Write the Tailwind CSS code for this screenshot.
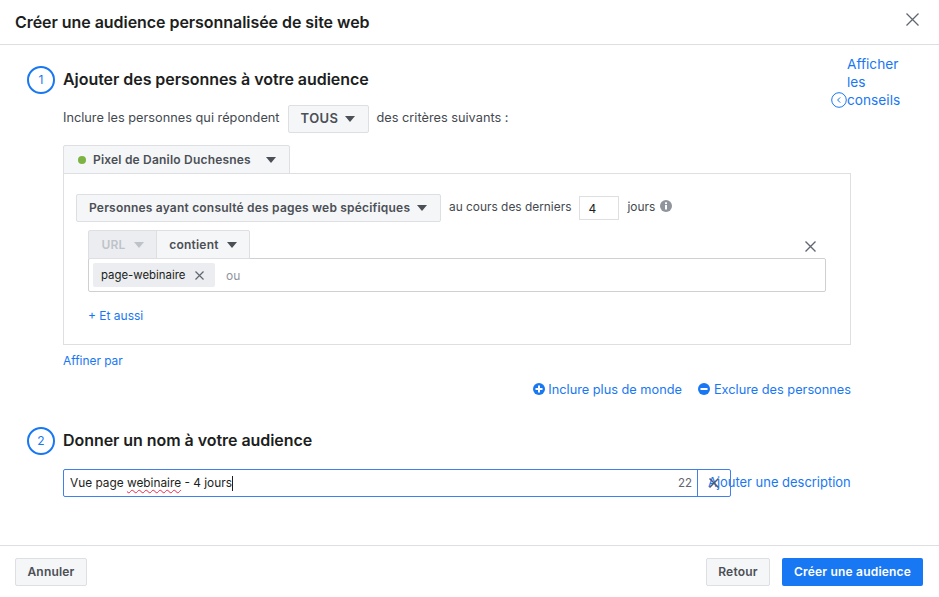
<!DOCTYPE html>
<html lang="fr">
<head>
    <meta charset="UTF-8">
    <meta name="viewport" content="width=device-width, initial-scale=1.0">
    <title>Créer une audience</title>
    <script src="https://cdn.jsdelivr.net/npm/@tailwindcss/browser@4"></script>
</head>
<body class="bg-white">
<div class="w-[939px] h-[597px] flex flex-col overflow-hidden font-['Inter','Liberation_Sans',sans-serif] text-[12px] text-[#1c1e21]">

    <header class="h-[45px] shrink-0 border-b border-[#dddfe2] flex items-center justify-between pl-[15px] pr-[20px]">
        <h1 class="text-[16px] font-semibold tracking-[-0.05px]">Créer une audience personnalisée de site web</h1>
        <svg class="w-[13px] h-[13px] -mt-[5px]" viewBox="0 0 13 13" fill="none" stroke="#606770" stroke-width="1.3"><path d="M.5.5l12 12M12.5.5l-12 12"/></svg>
    </header>

    <main class="flex-1 relative pl-[27px]">
        <!-- conseils -->
        <div class="absolute left-[847px] top-[10px] w-[70px] flex">
            <svg class="absolute -left-[16px] top-[37px] w-[16px] h-[16px]" viewBox="0 0 16 16" fill="none" stroke="#1877f2"><circle cx="8" cy="8" r="7.3"/><path d="M9.2 5.4L6.6 8l2.6 2.6"/></svg>
            <a class="text-[13.7px] leading-[18px] text-[#1877f2]">Afficher les conseils</a>
        </div>

        <section class="pt-[21px]">
            <div class="flex items-center gap-[8px]">
                <span class="w-[28px] h-[28px] rounded-full border-2 border-[#1877f2] flex items-center justify-center text-[#1877f2] text-[12px]">1</span>
                <h2 class="-mt-[2px] text-[16px] font-semibold tracking-[-0.05px]">Ajouter des personnes à votre audience</h2>
            </div>

            <div class="ml-[36px] mt-[11px] flex items-center h-[28px] text-[12.75px] text-[#444950]">
                <span class="-mt-[2px]">Inclure les personnes qui répondent</span>
                <button class="ml-[8px] w-[81px] h-[28px] flex items-center justify-center gap-[7px] bg-[#f5f6f7] border border-[#dddfe2] rounded-[2px] font-semibold text-[13px] tracking-[0.4px] text-[#4b4f56]">TOUS
                    <svg class="w-[10px] h-[6px]" viewBox="0 0 10 6" fill="#4b4f56"><path d="M0 0h10L5 6z"/></svg>
                </button>
                <span class="ml-[8px] -mt-[2px]">des critères suivants :</span>
            </div>

            <div class="ml-[36px] mt-[12px] w-[788px]">
                <button class="w-[227px] h-[29px] flex items-center pl-[14px] bg-[#f5f6f7] border border-[#dddfe2] rounded-t-[2px] font-semibold text-[#4b4f56] text-[12px] tracking-[0.2px]">
                    <span class="w-[8px] h-[8px] rounded-full bg-[#7cb342]"></span>
                    <span class="ml-[7px]">Pixel de Danilo Duchesnes</span>
                    <svg class="ml-[15px] w-[10px] h-[6px]" viewBox="0 0 10 6" fill="#4b4f56"><path d="M0 0h10L5 6z"/></svg>
                </button>

                <div class="h-[172px] -mt-px border border-[#dddfe2] pl-[12px] pt-[20px] relative">
                    <div class="flex items-center h-[28px]">
                        <button class="w-[365px] h-[28px] flex items-center pl-[12px] bg-[#f5f6f7] border border-[#dddfe2] rounded-[2px] font-semibold text-[#4b4f56] text-[12px] tracking-[0.2px]">
                            Personnes ayant consulté des pages web spécifiques
                            <svg class="ml-[7px] w-[10px] h-[6px]" viewBox="0 0 10 6" fill="#4b4f56"><path d="M0 0h10L5 6z"/></svg>
                        </button>
                        <span class="ml-[8px] -mt-[2px] text-[11.9px] text-[#444950]">au cours des derniers</span>
                        <input class="ml-[8px] w-[40px] h-[24px] border border-[#dddfe2] pl-[8px] text-[12px] text-[#1c1e21] outline-none" value="4">
                        <span class="ml-[8px] -mt-[2px] text-[11.9px] text-[#444950]">jours</span>
                        <svg class="ml-[5px] -mt-[4px] w-[12px] h-[12px]" viewBox="0 0 12 12"><circle cx="6" cy="6" r="6" fill="#90949c"/><rect x="5" y="5" width="2" height="4.5" fill="#fff"/><rect x="5" y="2.3" width="2" height="1.8" fill="#fff"/></svg>
                    </div>

                    <div class="ml-[12px] mt-[8px] w-[738px]">
                        <div class="flex items-end justify-between">
                            <div class="flex h-[29px] font-semibold text-[12px] tracking-[0.2px]">
                                <span class="w-[69px] flex items-center justify-center gap-[8px] bg-[#ebedf0] border border-[#dddfe2] rounded-tl-[2px] text-[#bec3c9]">URL
                                    <svg class="w-[10px] h-[6px]" viewBox="0 0 10 6" fill="#bec3c9"><path d="M0 0h10L5 6z"/></svg>
                                </span>
                                <span class="w-[94px] -ml-px flex items-center justify-center gap-[8px] bg-[#f5f6f7] border border-[#dddfe2] rounded-tr-[2px] text-[#4b4f56]">contient
                                    <svg class="w-[10px] h-[6px]" viewBox="0 0 10 6" fill="#4b4f56"><path d="M0 0h10L5 6z"/></svg>
                                </span>
                            </div>
                            <svg class="mr-[10px] mb-[7px] w-[11px] h-[11px]" viewBox="0 0 11 11" fill="none" stroke="#606770" stroke-width="1.4"><path d="M.5.5l10 10M10.5.5l-10 10"/></svg>
                        </div>
                        <div class="-mt-px h-[34px] border border-[#ced0d4] rounded-[2px] flex items-center pl-[4px]">
                            <span class="w-[122px] h-[24px] pt-px bg-[#ebedf0] rounded-[2px] flex items-center pl-[8px] text-[11.4px] text-[#1c1e21]">page-webinaire
                                <svg class="ml-[10px] -mt-px w-[9px] h-[9px]" viewBox="0 0 9 9" fill="none" stroke="#606770" stroke-width="1.2"><path d="M.5.5l8 8M8.5.5l-8 8"/></svg>
                            </span>
                            <span class="ml-[11px] mt-[1px] text-[#90949c] text-[12px]">ou</span>
                        </div>
                        <a class="block mt-[16px] text-[12px] leading-[16px] text-[#1877f2]">+ Et aussi</a>
                    </div>
                </div>

                <a class="block mt-[8px] text-[11.9px] leading-[16px] text-[#1877f2]">Affiner par</a>

                <div class="mt-[13px] flex justify-end items-center h-[16px] gap-[16px] text-[12.75px] text-[#1877f2]">
                    <span class="flex items-center gap-[3px]">
                        <svg class="w-[12px] h-[12px] -mt-[2px]" viewBox="0 0 12 12"><circle cx="6" cy="6" r="6" fill="#1877f2"/><path d="M5 2.5h2V5h2.5v2H7v2.5H5V7H2.5V5H5z" fill="#fff"/></svg>
                        Inclure plus de monde
                    </span>
                    <span class="flex items-center gap-[4px]">
                        <svg class="w-[12px] h-[12px] -mt-[2px]" viewBox="0 0 12 12"><circle cx="6" cy="6" r="6" fill="#1877f2"/><rect x="2.5" y="5" width="7" height="2" fill="#fff"/></svg>
                        Exclure des personnes
                    </span>
                </div>
            </div>
        </section>

        <section class="mt-[29px]">
            <div class="flex items-center gap-[8px]">
                <span class="w-[28px] h-[28px] rounded-full border-2 border-[#1877f2] flex items-center justify-center text-[#1877f2] text-[12px]">2</span>
                <h2 class="-mt-[2px] text-[16px] font-semibold tracking-[-0.05px]">Donner un nom à votre audience</h2>
            </div>
            <div class="ml-[36px] mt-[14px] w-[788px] flex items-center">
                <div class="w-[668px] shrink-0 h-[28px] relative z-10 border border-[#4080e8] rounded-[2px] flex items-center">
                    <div class="flex-1 pl-[6px] pt-[2px] text-[11.85px] text-[#1c1e21] flex items-center">Vue page&nbsp;<span class="underline decoration-wavy decoration-1 decoration-[#f02849] underline-offset-2">webinaire</span>&nbsp;- 4 jours<span class="w-px h-[15px] bg-[#1c1e21]"></span></div>
                    <span class="mr-[5px] pt-[2px] text-[11.5px] text-[#606770]">22</span>
                    <div class="w-[33px] h-full border-l border-[#4080e8] flex items-center justify-center">
                        <svg class="w-[10px] h-[10px]" viewBox="0 0 10 10" fill="none" stroke="#4b5b78" stroke-width="1.5"><path d="M.5.5l9 9M9.5.5l-9 9"/></svg>
                    </div>
                </div>
                <a class="ml-[-23px] -mt-[1px] whitespace-nowrap text-[12.95px] text-[#1877f2]">Ajouter une description</a>
            </div>
        </section>
    </main>

    <footer class="h-[52px] shrink-0 border-t border-[#dddfe2] flex items-center justify-between pl-[15px] pr-[16px] text-[12px] font-semibold tracking-[0.2px]">
        <button class="w-[72px] h-[28px] bg-[#f5f6f7] border border-[#dddfe2] rounded-[2px] text-[#4b4f56]">Annuler</button>
        <div class="flex items-center gap-[12px]">
            <button class="w-[64px] h-[28px] bg-[#f5f6f7] border border-[#dddfe2] rounded-[2px] text-[#4b4f56]">Retour</button>
            <button class="w-[141px] h-[28px] bg-[#1877f2] rounded-[2px] text-white">Créer une audience</button>
        </div>
    </footer>
</div>
</body>
</html>
